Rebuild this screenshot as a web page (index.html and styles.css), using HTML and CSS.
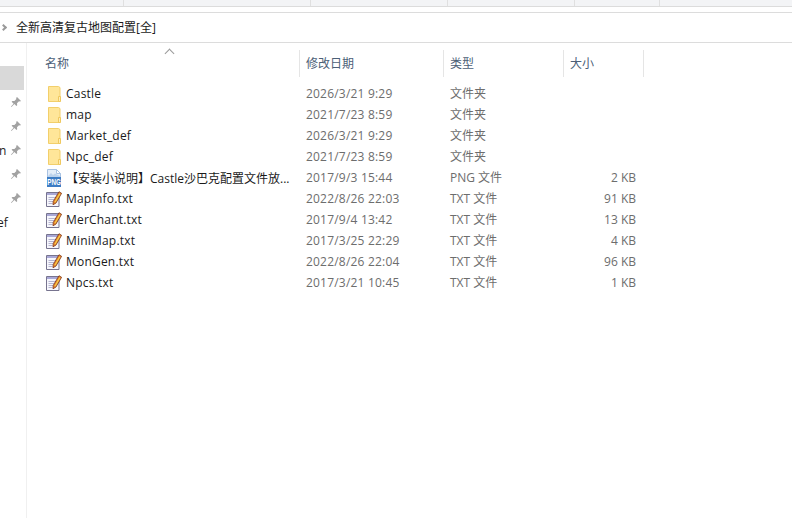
FILE: index.html
```html
<!DOCTYPE html>
<html lang="zh-CN">
<head>
    <meta charset="UTF-8">
    <title>全新高清复古地图配置[全]</title>
    <link rel="stylesheet" href="styles.css">
</head>
<body>
    <svg class="defs" width="0" height="0">
        <symbol id="folder" viewBox="0 0 16 16">
            <path d="M2.500 .500h10l1.500 1v14H2.500z" fill="#ffe699" stroke="#f2cf6b"/>
            <path d="M12.500 15.500v-5h2v5z" fill="#ffeeb5" stroke="#efc85f"/>
        </symbol>
        <symbol id="pin" viewBox="0 0 12 12">
            <path d="M7 1l4 4-1 .6-1-.3-2 2 .2 2-.8.8-2-2L1.500 11 1 10.500 3.600 7.700l-2-2 .8-.8 2 .2 2-2-.3-1z" fill="#a2a2a2"/>
        </symbol>
        <symbol id="txt" viewBox="0 0 16 16">
            <path d="M.5 1.500h12.500v14H.5z" fill="#f6f6fc" stroke="#77748f"/>
            <path d="M1 2h11.500v2H1z" fill="#a9a8d6"/>
            <path d="M2.500 6.500h8M2.500 8.500h6M2.500 10.500h5M2.500 12.500h4" stroke="#b5b5d0"/>
            <path d="M13 .7l2.600 1.600-5.600 9.700-3 1.800.2-3.400z" fill="#e57f2a" stroke="#7d3a1c" stroke-width=".8"/>
            <path d="M13.400 2.300l1 .6-5 8.600-1-.6z" fill="#f6d24a"/>
        </symbol>
        <symbol id="png" viewBox="0 0 16 18">
            <path d="M1.500 .500h9l4 4v13h-13z" fill="#e4edf8" stroke="#a9c2e2"/>
            <path d="M10.500 .500v4h4z" fill="#ffffff" stroke="#a9c2e2"/>
            <path d="M2 7l3-3 2 2 2-1.500L14 7v1H2z" fill="#bcd2ec"/>
            <path d="M1 8h14v10H1z" fill="#3d7cc4"/>
            <text class="png-label" x="8" y="16" text-anchor="middle" textLength="13.500" lengthAdjust="spacingAndGlyphs">PNG</text>
        </symbol>
    </svg>

    <div class="top-strip">
        <span class="strip-cell strip-1"></span>
        <span class="strip-cell strip-2"></span>
        <span class="strip-cell strip-3"></span>
        <span class="strip-cell strip-4"></span>
        <span class="strip-cell strip-5"></span>
    </div>

    <div class="address-bar">
        <span class="crumb-arrow"></span>
        <span class="crumb">全新高清复古地图配置[全]</span>
    </div>

    <div class="explorer">
        <aside class="side">
            <div class="side-item side-selected"></div>
            <div class="side-item"><svg class="pin"><use href="#pin"/></svg></div>
            <div class="side-item"><svg class="pin"><use href="#pin"/></svg></div>
            <div class="side-item"><span class="side-text">n</span><svg class="pin"><use href="#pin"/></svg></div>
            <div class="side-item"><svg class="pin"><use href="#pin"/></svg></div>
            <div class="side-item"><svg class="pin"><use href="#pin"/></svg></div>
            <div class="side-item"><span class="side-text side-text-cut">ef</span></div>
        </aside>

        <main class="files">
            <div class="sort-arrow"></div>
            <div class="head">
                <div class="col-name">名称</div>
                <div class="col-date">修改日期</div>
                <div class="col-type">类型</div>
                <div class="col-size">大小</div>
            </div>

            <div class="row">
                <div class="col-name"><svg class="ico"><use href="#folder"/></svg><span class="name">Castle</span></div>
                <div class="col-date">2026/3/21 9:29</div>
                <div class="col-type">文件夹</div>
                <div class="col-size"></div>
            </div>
            <div class="row">
                <div class="col-name"><svg class="ico"><use href="#folder"/></svg><span class="name">map</span></div>
                <div class="col-date">2021/7/23 8:59</div>
                <div class="col-type">文件夹</div>
                <div class="col-size"></div>
            </div>
            <div class="row">
                <div class="col-name"><svg class="ico"><use href="#folder"/></svg><span class="name">Market_def</span></div>
                <div class="col-date">2026/3/21 9:29</div>
                <div class="col-type">文件夹</div>
                <div class="col-size"></div>
            </div>
            <div class="row">
                <div class="col-name"><svg class="ico"><use href="#folder"/></svg><span class="name">Npc_def</span></div>
                <div class="col-date">2021/7/23 8:59</div>
                <div class="col-type">文件夹</div>
                <div class="col-size"></div>
            </div>
            <div class="row">
                <div class="col-name">
                    <svg class="ico ico-png"><use href="#png"/></svg>
                    <span class="name name-long">【安装小说明】Castle沙巴克配置文件放...</span>
                </div>
                <div class="col-date">2017/9/3 15:44</div>
                <div class="col-type">PNG 文件</div>
                <div class="col-size">2 KB</div>
            </div>
            <div class="row">
                <div class="col-name"><svg class="ico"><use href="#txt"/></svg><span class="name">MapInfo.txt</span></div>
                <div class="col-date">2022/8/26 22:03</div>
                <div class="col-type">TXT 文件</div>
                <div class="col-size">91 KB</div>
            </div>
            <div class="row">
                <div class="col-name"><svg class="ico"><use href="#txt"/></svg><span class="name">MerChant.txt</span></div>
                <div class="col-date">2017/9/4 13:42</div>
                <div class="col-type">TXT 文件</div>
                <div class="col-size">13 KB</div>
            </div>
            <div class="row">
                <div class="col-name"><svg class="ico"><use href="#txt"/></svg><span class="name">MiniMap.txt</span></div>
                <div class="col-date">2017/3/25 22:29</div>
                <div class="col-type">TXT 文件</div>
                <div class="col-size">4 KB</div>
            </div>
            <div class="row">
                <div class="col-name"><svg class="ico"><use href="#txt"/></svg><span class="name">MonGen.txt</span></div>
                <div class="col-date">2022/8/26 22:04</div>
                <div class="col-type">TXT 文件</div>
                <div class="col-size">96 KB</div>
            </div>
            <div class="row">
                <div class="col-name"><svg class="ico"><use href="#txt"/></svg><span class="name">Npcs.txt</span></div>
                <div class="col-date">2017/3/21 10:45</div>
                <div class="col-type">TXT 文件</div>
                <div class="col-size">1 KB</div>
            </div>
        </main>
    </div>
</body>
</html>
```

FILE: styles.css
```css
* {
    margin: 0;
    padding: 0;
    box-sizing: border-box;
}

body {
    width: 792px;
    height: 518px;
    overflow: hidden;
    background: #ffffff;
    font-family: "Open Sans", "Noto Sans CJK SC", sans-serif;
    font-size: 12px;
    color: #6d6d6d;
}

.defs {
    display: block;
    height: 0;
}

.top-strip {
    display: flex;
    height: 7px;
    background: #f3f4f6;
    border-bottom: 1px solid #dcdcdc;
}

.strip-cell {
    border-right: 1px solid #e0e0e0;
}

.strip-1 {
    width: 124px;
}

.strip-2 {
    width: 187px;
}

.strip-3 {
    width: 137px;
}

.strip-4 {
    width: 127px;
}

.strip-5 {
    width: 85px;
}

.address-bar {
    display: flex;
    align-items: center;
    height: 31px;
    margin-top: 5px;
    padding-left: 1px;
    padding-bottom: 2px;
    border-top: 1px solid #dcdcdc;
    border-bottom: 1px solid #dcdcdc;
}

.crumb-arrow {
    width: 5px;
    height: 5px;
    margin-top: 2px;
    border-top: 2px solid #9a9a9a;
    border-right: 2px solid #9a9a9a;
    transform: rotate(45deg);
}

.crumb {
    margin-left: 10px;
    color: #1a1a1a;
}

.explorer {
    display: flex;
    height: 475px;
}

.side {
    width: 27px;
    padding-top: 23px;
    border-right: 1px solid #f0f0f0;
}

.side-item {
    display: flex;
    align-items: center;
    justify-content: flex-end;
    height: 24px;
    width: 24px;
    padding-right: 2px;
    color: #222222;
}

.side-selected {
    background: #d9d9d9;
}

.side-text {
    margin-right: auto;
    margin-left: -1px;
}

.side-text-cut {
    margin-left: -3px;
}

.pin {
    width: 12px;
    height: 12px;
}

.files {
    position: relative;
    flex: 1;
    padding-left: 11px;
}

.sort-arrow {
    position: absolute;
    left: 139px;
    top: 7px;
    width: 7px;
    height: 7px;
    border-top: 1px solid #9a9a9a;
    border-left: 1px solid #9a9a9a;
    transform: rotate(45deg);
}

.head {
    display: flex;
    align-items: center;
    height: 27px;
    margin-top: 7px;
    margin-bottom: 6px;
    color: #4c6077;
}

.head > div {
    display: flex;
    align-items: center;
    height: 100%;
    padding-left: 6px;
    padding-bottom: 2px;
    border-right: 1px solid #e5e5e5;
}

.head .col-name {
    padding-left: 7px;
}

.row {
    display: flex;
    align-items: center;
    height: 21px;
}

.row > div {
    padding-left: 6px;
}

.row .col-name {
    padding-left: 8px;
}

.row .col-date {
    letter-spacing: 0.2px;
}

.row .col-type {
    padding-bottom: 2px;
}

.col-name {
    display: flex;
    align-items: center;
    width: 262px;
}

.col-date {
    width: 144px;
}

.col-type {
    width: 120px;
}

.col-size {
    width: 80px;
}

.row .col-size {
    padding-right: 8px;
    text-align: right;
}

.ico {
    flex: none;
    width: 16px;
    height: 16px;
}

.ico-png {
    height: 18px;
}

.png-label {
    fill: #ffffff;
    font-family: "Liberation Sans", sans-serif;
    font-size: 9px;
    font-weight: 700;
}

.name {
    margin-left: 4px;
    color: #1a1a1a;
    letter-spacing: 0.2px;
}

.name-long {
    letter-spacing: 0;
}
```
